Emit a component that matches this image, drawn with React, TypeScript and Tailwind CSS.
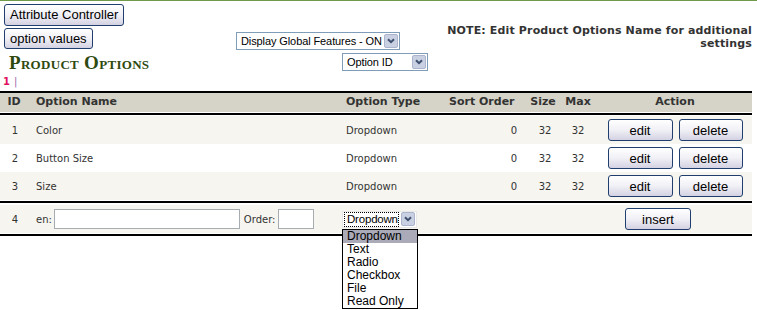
const rows = [
  { id: 1, name: 'Color' },
  { id: 2, name: 'Button Size' },
  { id: 3, name: 'Size' },
];

const typeOptions = ['Dropdown', 'Text', 'Radio', 'Checkbox', 'File', 'Read Only'];

const XpButton = ({ label, className = '' }: { label: string; className?: string }) => (
  <button
    className={`h-[22px] rounded-[3px] border border-[#213f6e] bg-linear-to-b from-white via-[#f0f0f6] to-[#d4d2e2] px-[5px] font-['Liberation_Sans',Arial,sans-serif] text-[13px] leading-none text-black ${className}`}
  >
    {label}
  </button>
);

const Arrow = () => (
  <span className="mr-px flex h-[14px] w-[14px] shrink-0 items-center justify-center rounded-[2px] border border-[#aab4cc] bg-[#c8d0e2]">
    <svg width="8" height="6" viewBox="0 0 8 6">
      <path d="M1 1.2 L4 4.2 L7 1.2" fill="none" stroke="#3f4f70" strokeWidth="2" />
    </svg>
  </span>
);

const FakeSelect = ({ label, className = '' }: { label: string; className?: string }) => (
  <div className={`flex h-[18px] items-center border border-[#7f9db9] bg-white ${className}`}>
    <span className="flex-1 whitespace-nowrap pl-[4px] font-['Liberation_Sans',Arial,sans-serif] text-[11px] leading-none tracking-[-0.1px] text-black">
      {label}
    </span>
    <Arrow />
  </div>
);

const App = () => {
  return (
    <div className="min-h-[310px] w-[757px] border-t border-[#6f9a4a] bg-white font-['DejaVu_Sans',Verdana,sans-serif] text-[#333]">
      {/* top controls */}
      <div className="flex h-[48px]">
        <div className="flex w-[236px] flex-col items-start gap-[2px] pl-1 pt-[3px]">
          <XpButton label="Attribute Controller" />
          <XpButton label="option values" className="h-[21px]" />
        </div>
        <div className="pt-[31px]">
          <FakeSelect label="Display Global Features - ON" className="w-[164px]" />
        </div>
        <div className="flex-1 pr-[5px] pt-[23px] text-right text-[11px] font-bold leading-[13px] tracking-[0.15px] text-[#333]">
          NOTE: Edit Product Options Name for additional
          <br />
          settings
        </div>
      </div>

      <div className="mt-[4px] flex h-[18px] items-center">
        <div className="w-[342px] pl-[9px] font-['Liberation_Serif',serif] text-[19px] font-bold leading-none tracking-[0.3px] text-[#2f4a10] [font-variant:small-caps]">
          Product Options
        </div>
        <FakeSelect label="Option ID" className="h-[17px] w-[86px]" />
      </div>

      <div className="mt-[5px] h-[12px] pl-[3px] text-[10px] font-bold leading-[12px]">
        <span className="text-[#e0115f]">1</span>
        <span className="ml-[4px] font-normal text-[#9a66aa]">|</span>
      </div>

      {/* table */}
      <div className="mt-[3px] w-[752px]">
        <div className="h-[2px] bg-black" />
        <div className="flex h-[19px] items-center bg-[#d6d4c8] text-[11px] font-bold">
          <div className="w-[28px] text-center">ID</div>
          <div className="w-[314px] pl-[8px]">Option Name</div>
          <div className="w-[103px] pl-[4px]">Option Type</div>
          <div className="w-[77px] pl-[4px]">Sort Order</div>
          <div className="w-[42px] text-center">Size</div>
          <div className="w-[28px] text-center">Max</div>
          <div className="flex-1 pl-[6px] text-center">Action</div>
        </div>
        <div className="mt-[1px] h-[2px] bg-black" />
        <div className="mt-[1px]">
          {rows.map((r, i) => (
            <div
              key={r.id}
              className={`flex h-[28px] items-center text-[10px] ${i % 2 === 0 ? 'bg-[#f6f5ef]' : 'bg-white'}`}
            >
              <div className="w-[30px] text-center">{r.id}</div>
              <div className="w-[312px] pl-[6px]">{r.name}</div>
              <div className="w-[103px] pl-[4px]">Dropdown</div>
              <div className="w-[77px] pr-[5px] text-right">0</div>
              <div className="w-[42px] pl-[4px] text-center">32</div>
              <div className="w-[28px] text-center">32</div>
              <div className="flex flex-1 justify-center gap-[6px] pl-[6px]">
                <XpButton label="edit" className="w-[65px]" />
                <XpButton label="delete" className="w-[64px]" />
              </div>
            </div>
          ))}
        </div>
        <div className="mt-[1px] h-[2px] bg-black" />
        <div className="mt-[2px] flex h-[28px] items-center bg-[#f6f5ef] text-[10px]">
          <div className="w-[30px] text-center">4</div>
          <div className="flex w-[312px] items-center pl-[6px]">
            <span>en:</span>
            <input className="ml-[2px] h-[20px] w-[186px] border border-[#a5acb2] bg-white" />
            <span className="ml-[4px]">Order:</span>
            <input className="ml-[3px] h-[20px] w-[36px] border border-[#a5acb2] bg-white" />
          </div>
          <div className="relative w-[103px]">
            <div className="flex h-[17px] w-[75px] items-center border border-[#e8e8e8] bg-white">
              <span className="ml-px mr-[2px] flex-1 whitespace-nowrap border border-dotted border-black pl-[2px] font-['Liberation_Sans',Arial,sans-serif] text-[11.5px] leading-[13px] tracking-[-0.2px] text-black">
                Dropdown
              </span>
              <Arrow />
            </div>
            <div className="absolute left-0 top-[18px] z-10 w-[76px] border border-black bg-white font-['Liberation_Sans',Arial,sans-serif] text-[12px] text-black">
              {typeOptions.map((o, i) => (
                <div key={o} className={`h-[13px] pl-[4px] leading-[13px] ${i === 0 ? 'bg-[#aaaab8]' : ''}`}>
                  {o}
                </div>
              ))}
            </div>
          </div>
          <div className="w-[77px]" />
          <div className="w-[42px]" />
          <div className="w-[28px]" />
          <div className="flex-1 pl-[33px]">
            <XpButton label="insert" className="w-[66px]" />
          </div>
        </div>
        <div className="mt-[1px] h-[2px] bg-black" />
      </div>
    </div>
  );
};

export default App;
